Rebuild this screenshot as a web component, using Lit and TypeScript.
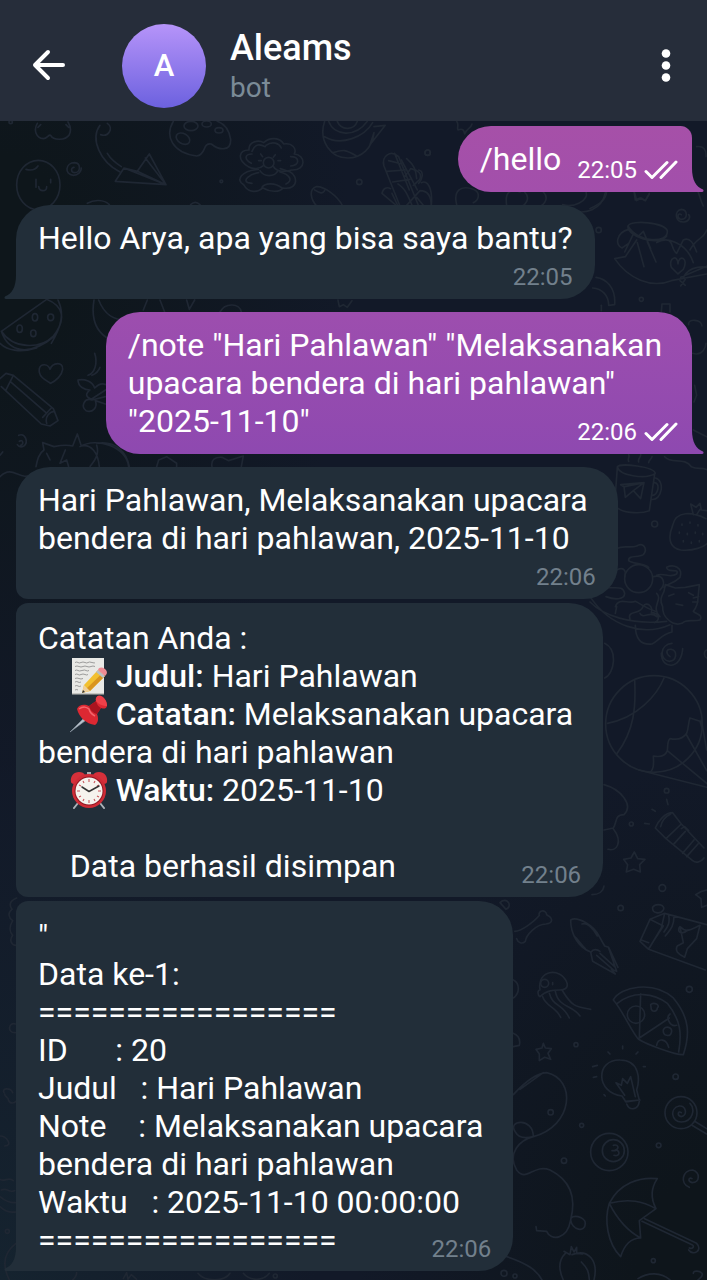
import { LitElement, html, svg, css, nothing, TemplateResult } from "lit";
import { customElement, property } from "lit/decorators.js";
import { classMap } from "lit/directives/class-map.js";

/* Doodle wallpaper: faint line drawings over a dark gradient. */
@customElement("chat-wallpaper")
export class ChatWallpaper extends LitElement {
  static styles = css`
    :host {
      display: block;
      background:
        radial-gradient(ellipse 45% 45% at 0% 100%, #15232f 0%, transparent 100%),
        radial-gradient(ellipse 50% 45% at 100% 100%, #0e151b 20%, transparent 100%),
        radial-gradient(ellipse 50% 45% at 0% 12%, #0e161b 20%, transparent 100%),
        #121928;
    }
    svg {
      display: block;
      width: 100%;
      height: 100%;
    }
    .lines {
      fill: none;
      stroke: #1f2733;
      stroke-width: 5;
      stroke-linecap: round;
      stroke-linejoin: round;
    }
  `;

  private top = svg`
    <g transform="translate(0 110) scale(.3333)">
      <path d="M112 40C100 60 108 84 130 86C142 86 146 72 152 76C160 92 196 92 208 74C216 58 210 46 204 36M122 44l-8 8M198 44l8 8"/>
      <ellipse cx="115" cy="225" rx="65" ry="74"/>
      <path d="M78 178c14 4 28 2 36-10M108 208v24M152 208v10M116 230c2 16 24 16 24 0"/>
      <path d="M222 172c-10 0-10 16 2 16c18 0 20-28 0-30c-28 0-32 36-4 38c14 0 24-10 24-22"/>
      <path d="M302 74c24 8 40-20 20-34M300 46c-30 40 0 110 60 140M322 130c12 20 24 28 42 40"/>
      <path d="M346 214l26-40l40 10l36-52l50 92zM372 174l126 50l-86-40M436 144l62 80M346 214l152 10"/>
      <path d="M520 34c-26 44-4 94 70 104c30-4 16-40 44-36c24 20 60 22 58-14c-4-26-16-46-40-54"/>
      <ellipse cx="549" cy="86" rx="22" ry="15" transform="rotate(30 549 86)"/>
      <ellipse cx="573" cy="48" rx="21" ry="14"/><ellipse cx="620" cy="42" rx="14" ry="9"/><ellipse cx="657" cy="61" rx="12" ry="8"/>
      <path d="M745 170c-36-22-28-50 2-50c-2-24 28-32 44-22c18-18 50-16 60 4c26-4 40 14 32 30c34 2 38 50-8 48c-20 6-44 8-56-12M745 170c14 8 34 8 46-4M754 160c-24-14-18-28 2-28M756 124c10-24 24-22 40-14M798 106c20-14 40-6 46 8M872 140c26 0 30 24 0 28"/>
      <circle cx="806" cy="158" r="16"/><path d="M782 132l6 8M826 134l-6 8M776 152h8M834 152h8"/>
      <path d="M775 178c-50 4-70 32-44 46c14 26 42 24 58 10c20 12 50 14 60 0c48 6 44-36 22-48l-30-10M780 182c12 20 44 20 54 0M776 188c-26 4-50 24-32 30l12 2M786 232c10-14 40-14 60 2M840 186c30 8 40 26 18 36"/>
      <path d="M974 34c-20 60 20 110 70 110c40 0 74-30 78-76M974 80c50 30 120 0 144-42M986 34c16 44 80 50 116 0M1012 34c10 26 50 30 60 0M1122 68l-12 36l46-58l-34 4M1000 128c30-10 36-10 70 10"/>
      <path d="M1200 288l-48-120c-8-30 20-50 44-28l60 148M1214 200l18-24c24 6 34 14 28 32l-20 18M1220 286l40-44c20 0 34 10 34 46M1186 284l-40-34c4-16 14-20 26-14M1166 152l40 10M1160 184l58-4M1178 216l52-8M1184 130l44 110M1176 250l18 38M1250 262l20 24"/>
      <path d="M1028 288c-14-30-56-60-80-58c-22 8-16 38 2 58M944 240c14 8 24 14 30 2M262 280c20-12 50-12 66 4M572 284q14-14 28 0"/>
      <circle cx="1283" cy="128" r="8"/><circle cx="1078" cy="216" r="8"/><circle cx="664" cy="214" r="4"/><circle cx="32" cy="36" r="5"/>
    </g>
    <g transform="translate(400 0) scale(.3333)">
      <path d="M170 364c8 10 0 18 4 26c14-6 18 0 20 12c6-18 20-16 22-30"/>
      <circle cx="83" cy="458" r="8"/>
      <path d="M4 480l48 90M20 476c24 20 28 36 30 60M56 510c18 4 10 30 0 40M64 548c20-10 34 20 30 66M36 616c-20-50-30-56-42-64M170 614c-10-40 10-60 50-46c20 8 20 30 0 40M320 616c-6-40 10-50 40-40M374 576c20 20 0 40-10 44M430 576c20 20 0 44-20 44M620 576c-4 30-30 40-50 50M886 560c10 10 14 40 24 58M890 440q30-4 28 30"/>
      <path d="M704 578l6 24l14-8l12 8l12-22"/>
    </g>
    <g transform="translate(560 190) scale(.3333)">
      <path d="M364 74c-12-8-14 12 0 14c20 0 20-28 0-30c-22 4-20 40 8 38c16-2 20-16 14-22"/>
      <path d="M204 108c10-20 110-10 118 14c4 40-90 36-118-14zM204 108c-6 30 90 64 116 30M206 118c-40 10-40 50-20 56l20-14M194 186l28-58l12 12l16-16l22 52M230 150l-34 50l-32 6c40 60 110 90 170 66l106-20M232 158l20 72M262 156l26 60M320 150c20 0 14 30 30 40l20-40c20-10 30 10 40 36M290 158c30-20 90 0 110 60M334 232c-10-30 20-40 20-10c2-30 34-20 16 16l-16 14zM362 262l80-34M370 262c20-40 70-30 70-30M360 272l16 14M376 268l-14 20M390 180c20-40 40-30 50-60"/>
      <path d="M78 4c10 30-40 50-70 40M136 8c-10 50-60 70-110 50M222 4l4 26l14-6l16 8l12-20"/>
      <path d="M108 262c30 4 60 30 56 82l-18 2c0-30-20-50-48-52M304 366l2-24h24v24M386 404c-4-20 40-16 40 4M398 490c30 10 40-20 40-30M404 586l6 30l-8 20M400 720l40 20"/>
      <circle cx="116" cy="120" r="8"/><circle cx="244" cy="328" r="6"/><path d="M124 346v16"/>
    </g>`;

  private middle = svg`
    <g transform="translate(0 280) scale(.3333)">
      <path d="M4 154L140 58c50 20 60 60 20 110c-40 40-120 40-156-14zM4 154c20 60 80 80 160 14M174 60c20 40 10 80-20 130M0 190c20 20 60 30 110 14"/>
      <ellipse cx="105" cy="112" rx="8" ry="11"/><ellipse cx="152" cy="112" rx="9" ry="10"/><ellipse cx="59" cy="146" rx="8" ry="11"/><ellipse cx="100" cy="160" rx="8" ry="10"/>
      <path d="M152 310c-20-12-38-22-34-44c4-16 26-16 32 2c8-22 40-24 38 0c-2 18-20 34-36 42z"/>
      <path d="M0 296l18-16l22 6l120 100l14 36l-24 16l-26-6L4 320M18 330l22-44M32 306l106 92M128 412l26-28M140 430c-6-20 10-36 24-36"/>
      <path d="M284 220c10 30 0 60-20 66M300 262c-4 12-14 20-24 24M234 300c20-4 44 4 50 24c20-20 30-10 36-10M234 300c0 20 20 30 36 30c-14 12-14 20 4 28l46-30M316 350l-40 10c-24-8-34 20-18 32c20 8 36-10 28-30l30 10"/>
      <path d="M58 484c12-8 14 10 4 12M56 466c20-8 30 20 16 32c-8 4-16 2-20-4"/>
      <path d="M108 560c4-20 8-40 24-50l-4-22l34 12c20-4 40-6 56-2l14-36l12 36c30-6 50 20 54 62M240 500c50-30 140 0 146 60M140 520l10 20M196 510l-16 40l20-10l6 20M290 490c60-10 90 30 98 70M290 496c10 30-10 50-20 64"/>
      <path d="M282 60c-10 60 10 100 50 120M296 60c20 50 50 60 80 60M442 60l-12 30M480 60l14 36M560 60l8 28l16-28M660 96c16-30 60-26 64 0M1014 60l4 20l12-6l12 8l14-20M470 560l6-20l24-10l30 20v10M636 560c-4-20 10-30 30-28l20 10l44-14l-6 32"/>
      <path d="M0 590c40-40 60 20 100-10M8 516l-8 10"/>
    </g>
    <g transform="translate(590 450) scale(.3333)">
      <path d="M82 50c10-12 110 0 114 20c-30 20-110 6-114-20zM82 52l-8 110c10 30 80 30 104 20l16-110M196 84c30 6 20 70-12 64M194 98c18 0 10 40-8 38M92 104l70-6l-10 48l-22-24l-24 20l-4-32zM104 110l58-12l-32 24M116 34c-4-10 4-12 0-20M146 36c-4-12 8-12 6-24M176 38c0-10 8-8 10-18M224 20c20 24 60 0 80 30c20 10 30 0 50 10"/>
      <circle cx="194" cy="222" r="9"/>
      <path d="M248 226c10-46 60-40 100-20M248 226c-20 50 0 70 24 74c40 4 70-10 80-20M310 194l-8-32l16 10l12-12l4 20l16 2M320 194l10-16"/>
      <path d="M276 222v4M300 216v4M324 224v4M268 246v4M292 250v4M316 246v4M338 250v4M280 272v4M304 276v4M328 272v4"/>
      <path d="M80 296c20-12 40 0 60-8c20-14 34 10 20 26c-16 10-46 0-44 18c10 10 40 6 60 20M80 360c20-10 30 0 24 20M48 410c20 10 50-8 56 20c0 20-30 20-56 10M76 470c10-30 40-6 60-16c20 10 30 20 60 30M80 470l-4 20M190 380c30-8 40 20 20 40M200 376c20-10 40 10 60-4c10-20-30 0-30-20c20-10 50 0 40 30c-20 20-40 20-48 30"/>
      <circle cx="146" cy="386" r="42"/>
      <path d="M0 440c60 90 160 120 240 84M0 456c40 40 120 70 230 58M120 508c-10-30 30-10 40-40c10-14 30 0 24 20c20 0 30 20 10 30M136 526c0 40 16 60 50 56c20-10 30-30 60-36v-20M150 490c10 20 30-10 50 10M200 430c20 20-20 40 10 70"/>
      <path d="M222 424l4-20l30 10l30-2l42-8l-4 40c0 20-6 30-14 40c10 10 30 10 20 26c-20 6-40-4-54 10c-30 10-60-20-58-50c-10-20-4-30 4-46M236 438l16-6M296 428l14 8M258 462l20 4M310 444l16-4M308 456h16"/>
      <path d="M240 620c-14-10-12-24 4-22c20 6 16 34-6 36c-30-4-30-50 8-54M214 610c0 50 60 50 64-14"/>
      <path d="M44 580c40 20 30 90 0 104M350 600c-10 4-8 20 0 24"/>
      <circle cx="192" cy="822" r="145"/>
      <path d="M134 690c4 80 0 150-54 222M222 684c-20 50-80 120-170 136M146 960l204 52M180 968c10-10 12-20 10-50c20 4 36 0 42-16c2-20 0-30 8-36c20 4 40 0 50-16c6-14 4-30 10-46l30 10l8 26M232 902l120 100M288 852l62 110M334 810l16 90"/>
    </g>
    <g transform="translate(400 760) scale(.3333)">
      <path d="M766 204c10-24 30-46 52-46l26 34l-46 44zM766 204l32 32M782 200c4-20 14-30 30-38M798 236l80 66c10 8 26 4 34-8M844 192l68 72M844 206l10-6l12 12M820 254l36-40M848 280l34-40M860 290l34-38"/>
      <path d="M800 118l4 16M756 148l10 6M734 190l14 2"/>
      <path d="M612 74c50 14 90 60 60 90c-30 0-20 24-32 40l-28 6M640 206c30 40 10 70-16 62M576 404c20 0 34-10 36-26"/>
      <path d="M703 276l10 20l22 2l-16 16l2 22l-20-8l-22 8l4-22l-12-16l22-4zM921 390l-16 4l-18 10l16 12l2 26l16-6"/>
      <circle cx="800" cy="92" r="7"/><circle cx="694" cy="192" r="6"/>
    </g>`;

  private bottom = svg`
    <g transform="translate(500 860) scale(.3333)">
      <path d="M0 128c20-20 40 10 18 20z"/>
      <circle cx="487" cy="84" r="10"/><circle cx="362" cy="144" r="8"/><circle cx="568" cy="388" r="9"/><circle cx="228" cy="554" r="6"/>
      <path d="M44 214c20 0 60-30 74-48c-6-14 20-20 22-2c20 10 20 26-2 28c-30 0-60 34-62 52c-10 10-22 4-26-8"/>
      <path d="M212 180c20-12 70 16 86 50l16 28l12 4l28 60M212 180c0 40 20 80 60 96l6 28l68 38l-12-14l16 6l-24-70M300 274c-6-4-20-10-26 2M290 286l50 44M300 280l44 40M246 192c14-6 32 10 46 36M222 228c12 10 20 24 34 38"/>
      <path d="M458 142c10-14 40-8 32 8c-10 14-34 10-32-8zM450 178l44-18l126 34M450 178l-30 66l26 24l170 62M450 178l40 20l-44 68M494 160l-10 44l-36 60M506 166c4 20 0 30-14 50M522 168c0 30-10 40-26 60M424 240l22 8M540 200c20 20 30 10 60-4l-10 40l-28 30l-8 26c-20-10-30-20-22-34l18-10zM540 200c-10 10 0 30 24 10"/>
      <path d="M120 390c-10-60 60-70 80-24c8 20-10 24-20 24c-20 0-40 0-60 20c-8-4-8-20 0-20z"/><circle cx="134" cy="370" r="12"/><path d="M158 368v6M128 410c10 30 40 30 54 62M148 400c10 40 40 30 60 74M166 394c10 50 50 40 74 74M186 390c30 50 40 50 86 58"/>
      <path d="M340 420c20-40 120-60 180-6c50 60 50 110 30 170c-20 2-110-30-134-46c-20-20-50-90-76-118zM352 430c50-40 110-30 150 0c40 50 44 90 34 146M422 402l-4 132l90-60"/>
      <circle cx="408" cy="464" r="26"/><path d="M452 434c10-8 30 0 20 10c0 10-14 14-18 4zM510 462c-14 10 0 40 20 34M490 510c4-14 30-10 24 8c-4 14-26 10-24-8zM470 556c4-24 30-20 36 6"/>
      <path d="M130 550l6 14l18 2l-10 14l8 18l-18-6l-16 10v-20l-10-14l18-4zM40 360c20 10 20 40 0 54M40 520q24 10 18 36l-18 4"/>
    </g>
    <g transform="translate(500 1060) scale(.3333)">
      <path d="M366 108c-80-10-80-110-6-108c60 0 60 60 50 90l8 30l-40 6zM376 124l44-4M380 132c8 20 34 20 38-8M374 106l-26-38l16 8l4-20l14 14l10-20l14 60M278 20l14-4M280 52l10-2M430 20h6M312 104l4 4M324-24l6 6M368-42v8M408-18l6-6"/>
      <path d="M40 104C80 60 110 40 140 38c90 20 80 160-40 192M60 88l70-50M100 230c0-60-80-50-54-14c10 20 30 20 54 14c-40 10-80 50-50 100c30 40 50-20 100 0c60 30 80 80 62 150c-10 60-60 64-72 34l-30-2l-2-12M212 480c0-20 44-10 44 10c0 30-40 20-44-10"/>
      <circle cx="152" cy="157" r="8"/><circle cx="245" cy="196" r="6"/><circle cx="192" cy="302" r="8"/><circle cx="527" cy="50" r="8"/><circle cx="476" cy="256" r="7"/><circle cx="460" cy="602" r="6"/><circle cx="12" cy="640" r="9"/><circle cx="45" cy="648" r="6"/>
      <circle cx="328" cy="276" r="56"/><circle cx="340" cy="272" r="33"/><path d="M340 256c14-4 20 10 6 14c16 0 14 22-4 16M336 272h10"/>
      <circle cx="543" cy="158" r="48"/><path d="M544 158c-10-8-14 10 0 12c20-4 14-34-6-32c-30 6-24 48 6 48c36-2 42-40 26-56M576 196l44 26M584 184l36 22"/>
      <path d="M576 356c-10-6-14 8 0 12c24 0 26-30 2-38c-30 0-40 40-10 52"/>
      <path d="M328 430c30-60 90-80 144-74c-20 30-20 60-4 90l-50 36l4 52c-30 0-50 24-60 56c-40-40-50-110-34-160zM328 430c60-16 100-6 140 16M328 430c20 40 50 80 94 104M426 484l150 70c10 6 0 14-8 10M434 476l156 74c20 20-10 40-24 20"/>
      <path d="M192 574l18 10l4-24l8 16l8-14v18l18 2M196 580c-20 20-20 50-6 80M216 584c50-20 80 20 66 76M244 606c20 20 22 30 24 52M20 590c60 20 90 40 106 70M414 656c30-20 70-20 96 4M580 640c0-10 20-8 26 0c6 10-10 16-12 20"/>
    </g>
    <g transform="translate(0 890) scale(.3333)">
      <path d="M50 24c-20 8-24 20-14 34c-14 10-10 26 2 34c-12 20-8 36 0 44c-12 16-2 30 10 30M46 402c-20-8-26 28 0 26M12 608c-8-14 20-16 26 0M14 612c0 10 12 8 12 20c4 10 18 8 22 2M0 738c20 0 40 30 14 30M0 868c14 10 24-10 40 4M4 900c20-8 20 10 40 2M0 920q24 20 48 18M0 950q20 20 48 16"/>
      <path d="M48 1060c-40 30-40 70-20 110M230 1148c0 10-8 18-12 22M370 1166l10-18l4 20l10-14l16 14M594 1150c20 26 80 26 96 0M730 1150c20 24 60 24 78 0"/>
      <circle cx="22" cy="1024" r="6"/><circle cx="826" cy="1158" r="6"/>
    </g>`;

  render() {
    return html`
      <svg viewBox="0 121 707 1159" preserveAspectRatio="xMinYMin slice" aria-hidden="true">
        <g class="lines">${this.top}${this.middle}${this.bottom}</g>
      </svg>
    `;
  }
}

/* A single message with its time and, when sent by the user, delivery ticks. */
@customElement("chat-bubble")
export class ChatBubble extends LitElement {
  @property({ type: Boolean, reflect: true }) out = false;
  @property() shape = "single";
  @property() placement = "row";
  @property() time = "";

  static styles = css`
    :host {
      display: flex;
      padding: 0 15px 0 16px;
    }
    :host([out]) {
      justify-content: flex-end;
    }
    .bubble {
      position: relative;
      box-sizing: border-box;
      display: flex;
      flex-direction: column;
      max-width: 90%;
      padding: 14px 22px 8px;
      border-radius: 34px 34px 34px 0;
      background: #222e39;
      color: #fff;
    }
    .bubble.out {
      border-radius: 34px 34px 0 34px;
      background: linear-gradient(#9d4eae, #8e49b0);
    }
    .bubble.compact {
      border-radius: 34px 12px 0 34px;
      background: linear-gradient(#a650a8, #a24fab);
    }
    .first {
      border-radius: 34px 34px 34px 12px;
    }
    .middle,
    .last {
      padding-top: 16px;
    }
    .middle {
      border-radius: 12px 34px 34px 12px;
    }
    .last {
      border-radius: 12px 34px 34px 0;
    }
    .inline {
      flex-direction: row;
      align-items: flex-end;
      gap: 16px;
    }
    .text {
      margin-bottom: 6px;
      white-space: break-spaces;
      font-size: 32px;
      line-height: 38px;
    }
    .meta {
      display: flex;
      align-items: center;
      align-self: flex-end;
      gap: 7px;
      font-size: 24px;
      line-height: 28px;
      color: #72808c;
    }
    .tucked .meta {
      margin-top: -30px;
    }
    .out.tucked .meta {
      margin-top: -28px;
    }
    .out .meta {
      margin-right: -8px;
      color: #fff;
    }
    .tail {
      position: absolute;
      bottom: 0;
      right: 100%;
      display: block;
      fill: #222e39;
    }
    .out .tail {
      right: auto;
      left: 100%;
      fill: #8e49b0;
      transform: scaleX(-1);
    }
    .compact .tail {
      fill: #a24fab;
    }
  `;

  render() {
    const tailed = this.shape === "single" || this.shape === "last";
    return html`
      <div
        class=${classMap({
          bubble: true,
          out: this.out,
          compact: this.out && this.placement === "inline",
          [this.shape]: true,
          [this.placement]: true,
        })}
      >
        <div class="text"><slot></slot></div>
        <div class="meta">
          <time>${this.time}</time>
          ${this.out
            ? html`<svg width="34" height="20" viewBox="0 0 34 20" fill="none" stroke="#fff" stroke-width="3" stroke-linecap="round" stroke-linejoin="round" role="img" aria-label="Dibaca">
                <path d="M2 11.5L8 17.5L23 2.5M17 17.5L32 2" />
              </svg>`
            : nothing}
        </div>
        ${tailed
          ? html`<svg class="tail" width="12" height="24" viewBox="0 0 12 24" aria-hidden="true">
              <path d="M12 0C12 12 8 19 1 21.5C0 22.5 .5 24 2 24H12Z" />
            </svg>`
          : nothing}
      </div>
    `;
  }
}

const memo = html`<svg class="emoji" viewBox="0 0 38 38" role="img" aria-label="memo"><path d="M2 1H34V37H2Z" fill="#e9e9e6"/><path d="M2 36H34V37.500H2Z" fill="#c4c4c0"/><path d="M5 5.500q2-1 3 0t3 0t4 0t3 0t4 0t3 0M5 9.500q2-1 4 0t4 0t4 0t4 0t4 0M5 13.500q2-1 3 0t4 0t4 0t3 0M5 17.500q2-1 3 0t3 0t4 0t3 0M5 21.500q2-1 4 0t4 0M5 25q2-1 3 0t3 0M5 29q2-1 3 0t3 0M5 33q2-1 3 0" fill="none" stroke="#888" stroke-width=".8"/><path d="M12 36L14 28L28 13L35 19L20 34Z" fill="#f2c02f"/><path d="M20 34L35 19L32 16.500L16 32Z" fill="#d9951f"/><path d="M12 36L14 28L20 34Z" fill="#efcf9a"/><path d="M12 36l1-3l2 2z" fill="#333"/><path d="M26 15L28 13L35 19L33 21Z" fill="#b9bfc4"/><path d="M28 13C29 10 32 10 35 12C38 15 37 17 35 19Z" fill="#ee8b93"/></svg>`;

const pin = html`<svg class="emoji" viewBox="0 0 38 38" role="img" aria-label="pushpin"><path d="M17 20L0 37L19 23Z" fill="#b7c1cb" stroke="#8d98a4" stroke-width=".6"/><path d="M7 14C9 9 15 9 19 11L26 6C25 2 28 0 31 1C35 3 37 7 37 11C36 14 34 14 31 13L27 19C29 24 28 28 25 30C16 29 9 22 7 14Z" fill="#dc2832"/><path d="M19 11L26 6C27 10 29 12 31 13L27 19C23 18 20 15 19 11Z" fill="#a9141f"/><path d="M26 6C25 2 28 0 31 1C35 3 37 7 37 11C33 11 28 9 26 6Z" fill="#ee4049"/><path d="M9 14c4-3 8-2 10 0c1 4 4 6 6 7" fill="none" stroke="#f4666d" stroke-width="1.500"/></svg>`;

const clock = html`<svg class="emoji" viewBox="0 0 38 38" role="img" aria-label="alarm clock"><path d="M8 32L4 37M30 32L34 37" stroke="#aab2b8" stroke-width="2" stroke-linecap="round"/><path d="M17 1h4v4h-4z" fill="#a9aeb3"/><path d="M1 11C0 5 4 1 9 1C12 1 14 2 15 4L4 13C3 13 1 12 1 11ZM37 11C38 5 34 1 29 1C26 1 24 2 23 4L34 13C35 13 37 12 37 11Z" fill="#d5303a"/><circle cx="19" cy="20" r="17" fill="#cf2b36"/><circle cx="19" cy="20" r="14.500" fill="#8e1722"/><circle cx="19" cy="20" r="13.500" fill="#f6f3ee"/><path d="M19 8v3M19 29v3M7 20h3M28 20h3M13 10l1 2M25 10l-1 2M9 14l2 1M29 14l-2 1M9 26l2-1M29 26l-2-1M13 30l1-2M25 30l-1-2" stroke="#c9545a" stroke-width="1.100"/><path d="M12 16L19 20.500L29 15" fill="none" stroke="#333" stroke-width="1.500" stroke-linecap="round" stroke-linejoin="round"/></svg>`;

interface Message {
  out?: boolean;
  shape: "single" | "first" | "middle" | "last";
  placement: "row" | "inline" | "tucked";
  time: string;
  lines: (string | TemplateResult)[];
}

const messages: Message[] = [
  { out: true, shape: "single", placement: "inline", time: "22:05", lines: ["/hello"] },
  { shape: "single", placement: "row", time: "22:05", lines: ["Hello Arya, apa yang bisa saya bantu?"] },
  {
    out: true,
    shape: "single",
    placement: "tucked",
    time: "22:06",
    lines: ['/note "Hari Pahlawan" "Melaksanakan ', 'upacara bendera di hari pahlawan" ', '"2025-11-10"'],
  },
  {
    shape: "first",
    placement: "row",
    time: "22:06",
    lines: ["Hari Pahlawan, Melaksanakan upacara ", "bendera di hari pahlawan, 2025-11-10"],
  },
  {
    shape: "middle",
    placement: "tucked",
    time: "22:06",
    lines: [
      "Catatan Anda :",
      html`    ${memo} <b>Judul:</b> Hari Pahlawan`,
      html`    ${pin} <b>Catatan:</b> Melaksanakan upacara `,
      "bendera di hari pahlawan",
      html`    ${clock} <b>Waktu:</b> 2025-11-10`,
      " ",
      "    Data berhasil disimpan",
    ],
  },
  {
    shape: "last",
    placement: "tucked",
    time: "22:06",
    lines: [
      '"',
      "Data ke-1:",
      "=================",
      "ID      : 20",
      "Judul   : Hari Pahlawan",
      "Note    : Melaksanakan upacara ",
      "bendera di hari pahlawan",
      "Waktu   : 2025-11-10 00:00:00",
      "=================",
    ],
  },
];

@customElement("app-root")
export class AppRoot extends LitElement {
  static styles = css`
    :host {
      display: flex;
      flex-direction: column;
      min-height: 100vh;
      background: #121928;
      color: #fff;
      font-family: Roboto, "Noto Sans", sans-serif;
    }
    header {
      display: flex;
      align-items: center;
      box-sizing: border-box;
      height: 121px;
      padding: 10px 17px 0 25px;
      background: #262d3a;
    }
    button {
      display: grid;
      place-items: center;
      width: 48px;
      height: 48px;
      padding: 0;
      border: 0;
      background: none;
      color: inherit;
      cursor: pointer;
    }
    .avatar {
      display: grid;
      place-items: center;
      width: 84px;
      height: 84px;
      margin: 0 24px 0 49px;
      border-radius: 50%;
      background: linear-gradient(#b694f9, #6c61df);
      font-size: 31px;
      font-weight: 500;
    }
    .peer {
      flex: 1;
      min-width: 0;
      padding-top: 3px;
    }
    h1 {
      margin: 0;
      font-size: 36px;
      line-height: 42px;
      font-weight: 500;
    }
    .status {
      margin: 0;
      font-size: 28px;
      line-height: 38px;
      color: #7b8b97;
    }
    main {
      position: relative;
      flex: 1;
      overflow: hidden;
    }
    chat-wallpaper {
      position: absolute;
      inset: 0;
    }
    .thread {
      position: relative;
      display: flex;
      flex-direction: column;
      gap: 13px;
      padding: 5px 0 8px;
    }
    .group {
      display: flex;
      flex-direction: column;
      gap: 4px;
    }
    .line {
      display: block;
    }
    b {
      font-weight: 500;
    }
    .emoji {
      width: 38px;
      height: 38px;
      vertical-align: bottom;
    }
  `;

  private bubble(m: Message) {
    const lines = m.lines.map((line) => html`<span class="line">${line}</span>`);
    return html`<chat-bubble ?out=${m.out} .shape=${m.shape} .placement=${m.placement} .time=${m.time}>${lines}</chat-bubble>`;
  }

  render() {
    return html`
      <header>
        <button aria-label="Kembali">
          <svg width="36" height="36" viewBox="0 0 36 36" fill="none" stroke="#fff" stroke-width="4" stroke-linecap="round" stroke-linejoin="round">
            <path d="M17 4L4 17L17 30M4 17H32" />
          </svg>
        </button>
        <div class="avatar" aria-hidden="true">A</div>
        <div class="peer">
          <h1>Aleams</h1>
          <p class="status">bot</p>
        </div>
        <button aria-label="Menu">
          <svg width="10" height="36" viewBox="0 0 10 36" fill="#fff">
            <circle cx="5" cy="5.500" r="4.300" /><circle cx="5" cy="17.500" r="4.300" /><circle cx="5" cy="29.500" r="4.300" />
          </svg>
        </button>
      </header>
      <main>
        <chat-wallpaper></chat-wallpaper>
        <div class="thread">
          ${messages.slice(0, 3).map((m) => this.bubble(m))}
          <div class="group">${messages.slice(3).map((m) => this.bubble(m))}</div>
        </div>
      </main>
    `;
  }
}
